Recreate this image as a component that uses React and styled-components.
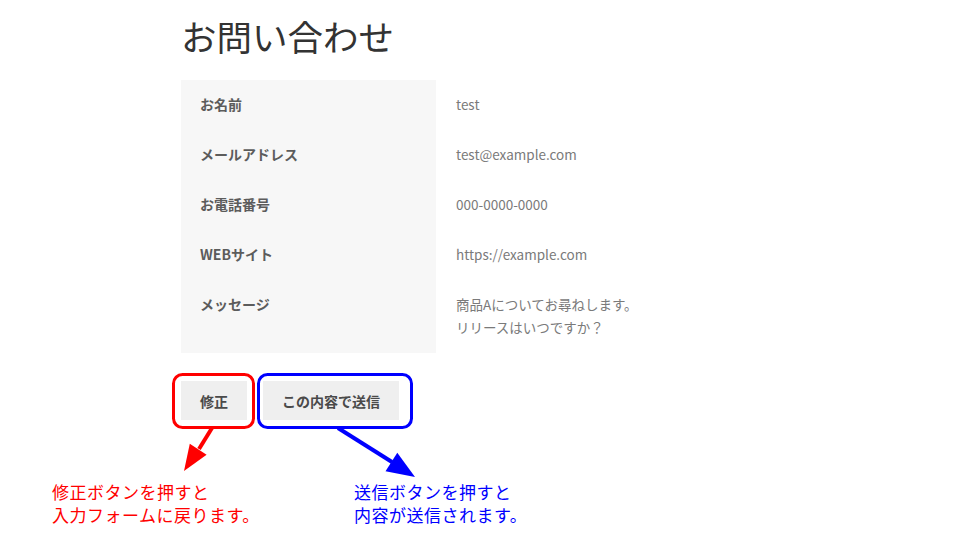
import styled, { createGlobalStyle } from 'styled-components';

const GlobalStyle = createGlobalStyle`
  body {
    margin: 0;
    background: #fff;
    font-family: "Noto Sans CJK JP", "Noto Sans", sans-serif;
  }
`;

const rows = [
  { label: 'お名前', value: ['test'] },
  { label: 'メールアドレス', value: ['test@example.com'] },
  { label: 'お電話番号', value: ['000-0000-0000'] },
  { label: 'WEBサイト', value: ['https://example.com'] },
  { label: 'メッセージ', value: ['商品Aについてお尋ねします。', 'リリースはいつですか？'] },
];

const App = () => {
  return (
    <Page>
      <GlobalStyle />
      <Content>
        <Title>お問い合わせ</Title>
        <ConfirmTable>
          {rows.map(row => (
            <Row key={row.label}>
              <Label>{row.label}</Label>
              <Value>
                {row.value.map(line => (
                  <Line key={line}>{line}</Line>
                ))}
              </Value>
            </Row>
          ))}
        </ConfirmTable>
        <Buttons>
          <Button>修正</Button>
          <Button>この内容で送信</Button>
        </Buttons>
      </Content>

      <Overlay width="960" height="540" viewBox="0 0 960 540">
        <rect x="173.5" y="374.5" width="80" height="53" rx="9" fill="none" stroke="#ff0000" strokeWidth="3" />
        <rect x="258.5" y="374.5" width="153" height="53" rx="9" fill="none" stroke="#0000ff" strokeWidth="3" />
        <line x1="212" y1="428" x2="199" y2="449" stroke="#ff0000" strokeWidth="4" />
        <polygon points="184,471 206.6,454.7 189.8,443.7" fill="#ff0000" />
        <line x1="338" y1="428" x2="392" y2="462" stroke="#0000ff" strokeWidth="4" />
        <polygon points="415,477 385.5,471.3 397.3,452.7" fill="#0000ff" />
      </Overlay>

      <Note color="#ff0000" left={52}>
        修正ボタンを押すと
        <br />
        入力フォームに戻ります。
      </Note>
      <Note color="#0000ff" left={354}>
        送信ボタンを押すと
        <br />
        内容が送信されます。
      </Note>
    </Page>
  );
};

const Page = styled.div`
  position: relative;
  width: 960px;
  height: 540px;
  overflow: hidden;
`;

const Content = styled.div`
  padding: 14px 0 0 181px;
`;

const Title = styled.h1`
  margin: 0 0 23px;
  font-family: "Noto Sans CJK JP", sans-serif;
  font-size: 35.5px;
  line-height: 43px;
  font-weight: 400;
  color: #333;
`;

const ConfirmTable = styled.div`
  display: flex;
  flex-direction: column;
`;

const Row = styled.div`
  display: grid;
  grid-template-columns: 255px auto;
`;

const Label = styled.div`
  background: #f7f7f7;
  padding: 13px 0 14px 19px;
  font-family: "Noto Sans CJK JP", sans-serif;
  font-size: 14px;
  line-height: 23px;
  font-weight: 700;
  color: #5c5c5c;
`;

const Value = styled.div`
  padding: 13px 0 14px 20px;
  font-family: "Noto Sans CJK JP", sans-serif;
  font-size: 13.5px;
  line-height: 23px;
  color: #7a7a7a;
`;

const Line = styled.div``;

const Buttons = styled.div`
  display: flex;
  gap: 16px;
  margin-top: 28px;
`;

const Button = styled.button`
  height: 39px;
  padding: 0 19px;
  border: none;
  background: #efefef;
  font-family: "Noto Sans CJK JP", sans-serif;
  font-size: 14px;
  font-weight: 700;
  color: #4a4a4a;
`;

const Overlay = styled.svg`
  position: absolute;
  top: 0;
  left: 0;
  pointer-events: none;
`;

const Note = styled.div`
  position: absolute;
  top: 480px;
  left: ${props => props.left}px;
  font-family: "Noto Sans CJK JP", sans-serif;
  font-size: 17px;
  letter-spacing: 0.5px;
  line-height: 23px;
  color: ${props => props.color};
`;

export default App;
